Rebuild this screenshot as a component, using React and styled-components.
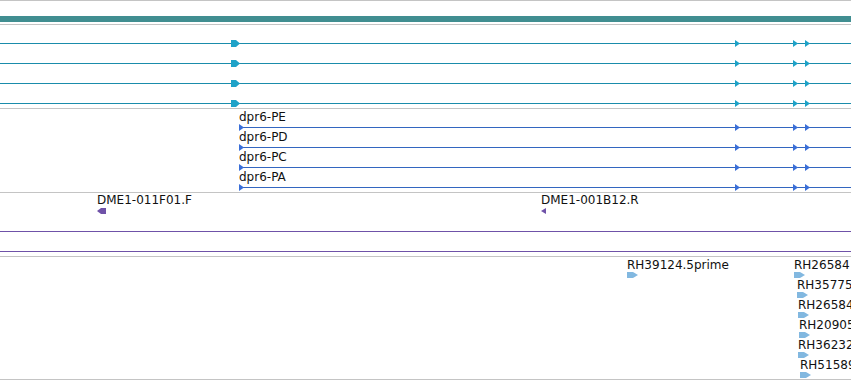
import React from "react";
import styled, { createGlobalStyle } from "styled-components";

const GlobalStyle = createGlobalStyle`
  html, body { margin: 0; padding: 0; background: #fff; }
  body { font-family: "DejaVu Sans", "Liberation Sans", sans-serif; }
`;

const GRAY = "#c4c4c4";
const C = {
  teal: "#418e91",
  cyanLine: "#1a8cab",
  cyanArrow: "#1ea2c8",
  blueLine: "#3366c0",
  blueArrow: "#3a6fd8",
  purple: "#6f52a8",
  rh: "#82b8e0",
};

const Page = styled.div`
  width: 851px;
  height: 381px;
  overflow: hidden;
  border-top: 1px solid ${GRAY};
  box-sizing: border-box;
  display: flex;
  flex-direction: column;
`;

const Track = styled.section`
  position: relative;
  height: ${(p) => p.$h}px;
  border-bottom: 1px solid ${GRAY};
  box-sizing: content-box;
  flex: none;
  display: flex;
  flex-direction: column;
`;

const TealBar = styled.div`
  height: 6px;
  background: ${C.teal};
  margin-top: 15px;
`;

/* A horizontal strand: a 1px line across which exon arrows are drawn
   at their genomic positions. */
const Strand = styled.div`
  position: relative;
  height: 1px;
  flex: none;
  background: ${(p) => p.$c};
  margin-left: ${(p) => p.$x || 0}px;
  margin-top: ${(p) => p.$mt || 0}px;
`;

const Lane = styled.div`
  display: flex;
  flex-direction: column;
  height: 20px;
  flex: none;
`;

const FeatureLane = styled.div`
  position: relative;
  flex: none;
  height: ${(p) => p.$h}px;
`;

/* A labelled feature on the canvas: label above, glyph below. */
const Feature = styled.div`
  position: absolute;
  left: ${(p) => p.$x}px;
  top: ${(p) => p.$y || 0}px;
  display: flex;
  flex-direction: column;
  align-items: flex-start;
  gap: ${(p) => p.$gap || 0}px;
`;

const Stack = styled.div`
  position: absolute;
  left: ${(p) => p.$x}px;
  top: ${(p) => p.$y}px;
  display: flex;
  flex-direction: column;
  gap: 1px;
`;

const StackItem = styled.div`
  display: flex;
  flex-direction: column;
  align-items: flex-start;
  margin-left: ${(p) => p.$dx}px;
`;

const Label = styled.div`
  font-size: 12px;
  line-height: 13px;
  color: #111;
  white-space: nowrap;
  margin-left: ${(p) => p.$dx || 0}px;
  margin-top: ${(p) => p.$mt || 0}px;
`;

const Mark = styled.svg`
  position: absolute;
  left: ${(p) => p.$x}px;
  top: -3px;
  display: block;
  overflow: visible;
`;

const Glyph = styled.svg`
  display: block;
  flex: none;
`;

const exons = [735, 793, 805];

function BigMark({ x, color }) {
  return (
    <Mark $x={x} width="9" height="7" viewBox="0 0 9 7">
      <polygon points="0,0 5,0 9,3.5 5,7 0,7" fill={color} />
    </Mark>
  );
}

function SmallMark({ x, color }) {
  return (
    <Mark $x={x} width="5" height="7" viewBox="0 0 5 7">
      <polygon points="0,0 5,3.5 0,7" fill={color} />
    </Mark>
  );
}

function LeftArrow({ big }) {
  return big ? (
    <Glyph width="9" height="6" viewBox="0 0 9 6">
      <polygon points="0,3 4,0 9,0 9,6 4,6" fill={C.purple} />
    </Glyph>
  ) : (
    <Glyph width="5" height="6" viewBox="0 0 5 6">
      <polygon points="5,0 0,3 5,6" fill={C.purple} />
    </Glyph>
  );
}

function RhArrow() {
  return (
    <Glyph width="11" height="6" viewBox="0 0 11 6">
      <polygon points="0,0 6,0 11,3 6,6 0,6" fill={C.rh} />
    </Glyph>
  );
}

function TranscriptLane() {
  return (
    <Lane>
      <Strand $c={C.cyanLine} $mt={18}>
        <BigMark x={231} color={C.cyanArrow} />
        {exons.map((x) => (
          <SmallMark key={x} x={x} color={C.cyanArrow} />
        ))}
      </Strand>
    </Lane>
  );
}

function ProteinLane({ name }) {
  return (
    <Lane>
      <Label $dx={239} $mt={2}>{name}</Label>
      <Strand $c={C.blueLine} $x={239} $mt={3}>
        <SmallMark x={0} color={C.blueArrow} />
        {exons.map((x) => (
          <SmallMark key={x} x={x - 239} color={C.blueArrow} />
        ))}
      </Strand>
    </Lane>
  );
}

const rhStack = [
  { name: "RH26584", dx: 0 },
  { name: "RH35775", dx: 3 },
  { name: "RH26584", dx: 4 },
  { name: "RH20905", dx: 5 },
  { name: "RH36232", dx: 4 },
  { name: "RH51589", dx: 6 },
];

export default function App() {
  return (
    <>
      <GlobalStyle />
      <Page>
        <Track $h={23}>
          <TealBar />
        </Track>

        <Track $h={83}>
          {[0, 1, 2, 3].map((i) => (
            <TranscriptLane key={i} />
          ))}
        </Track>

        <Track $h={83}>
          {["dpr6-PE", "dpr6-PD", "dpr6-PC", "dpr6-PA"].map((n) => (
            <ProteinLane key={n} name={n} />
          ))}
        </Track>

        <Track $h={63}>
          <FeatureLane $h={38}>
            <Feature $x={97} $y={1} $gap={1}>
              <Label>DME1-011F01.F</Label>
              <LeftArrow big />
            </Feature>
            <Feature $x={541} $y={1} $gap={1}>
              <Label>DME1-001B12.R</Label>
              <LeftArrow />
            </Feature>
          </FeatureLane>
          <Strand $c={C.purple} />
          <Strand $c={C.purple} $mt={19} />
        </Track>

        <Track $h={122}>
          <FeatureLane $h={122}>
            <Feature $x={627} $y={2}>
              <Label>RH39124.5prime</Label>
              <RhArrow />
            </Feature>
            <Stack $x={794} $y={2}>
              {rhStack.map((f, i) => (
                <StackItem key={i} $dx={f.dx}>
                  <Label>{f.name}</Label>
                  <RhArrow />
                </StackItem>
              ))}
            </Stack>
          </FeatureLane>
        </Track>
      </Page>
    </>
  );
}
